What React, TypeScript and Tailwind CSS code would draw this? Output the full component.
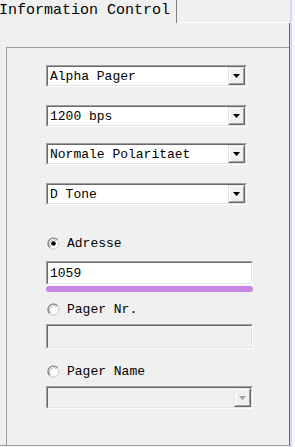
import React from "react";

const MONO = "font-['Liberation_Mono','DejaVu_Sans_Mono',monospace]";

function Sunken({ w, h, bg, children }: { w: number; h: number; bg: string; children?: React.ReactNode }) {
  return (
    <div
      className="border border-t-[#a0a0a0] border-l-[#a0a0a0] border-r-white border-b-white"
      style={{ width: w, height: h }}
    >
      <div
        className={`w-full h-full border border-t-[#696969] border-l-[#696969] border-r-[#e3e3e3] border-b-[#e3e3e3] flex items-center ${bg}`}
      >
        {children}
      </div>
    </div>
  );
}

function DropButton({ disabled }: { disabled?: boolean }) {
  return (
    <div className="h-full w-[17px] border border-t-[#e3e3e3] border-l-[#e3e3e3] border-r-[#696969] border-b-[#696969] bg-[#f0f0f0]">
      <div className="w-full h-full border border-t-white border-l-white border-r-[#a0a0a0] border-b-[#a0a0a0] flex items-center justify-center">
        <svg width="7" height="4" viewBox="0 0 7 4">
          <polygon points="0,0 7,0 3.5,4" fill={disabled ? "#a0a0a0" : "#000"} />
        </svg>
      </div>
    </div>
  );
}

function Combo({ text, w = 201, h = 22, disabled }: { text?: string; w?: number; h?: number; disabled?: boolean }) {
  return (
    <Sunken w={w} h={h} bg={disabled ? "bg-[#f0f0f0]" : "bg-white"}>
      <div className={`flex-1 pl-[2px] text-[13px] leading-none text-black whitespace-pre ${MONO}`}>{text}</div>
      <DropButton disabled={disabled} />
    </Sunken>
  );
}

function Radio({ checked, label }: { checked?: boolean; label: string }) {
  return (
    <div className="flex items-center h-[14px]">
      <svg width="13" height="13" viewBox="0 0 13 13" className="ml-[1px] shrink-0">
        <circle cx="6.5" cy="6.5" r="5.5" fill="#ffffff" stroke="#c8c8c8" strokeWidth="1" />
        <path d="M 2.6 10.4 A 5.5 5.5 0 0 1 10.4 2.6" fill="none" stroke="#7a7a7a" strokeWidth="1.2" />
        <path d="M 3.5 9.5 A 4.3 4.3 0 0 1 9.5 3.5" fill="none" stroke="#a0a0a0" strokeWidth="0.8" />
        {checked && <circle cx="6.5" cy="6.5" r="2.3" fill="#000" />}
      </svg>
      <span className={`ml-[7px] text-[13px] leading-none text-black whitespace-pre ${MONO}`}>{label}</span>
    </div>
  );
}

export default function App() {
  return (
    <div className="w-[295px] h-[447px] bg-[#f0f0f0] flex overflow-hidden">
      <div className="w-[290px] flex flex-col">
        <div className="h-[23px] flex shrink-0">
          <div className="w-[177px] border-r border-[#808080] relative">
            <span className={`absolute left-[-1px] top-[2px] text-[15px] leading-[18px] text-black whitespace-pre ${MONO}`}>
              Information Control
            </span>
          </div>
          <div className="flex-1 border-b border-white" />
        </div>
        <div className="h-[423px] shrink-0 border-r border-r-[#696969] border-b border-b-[#a0a0a0] pl-[6px] pt-[24px] flex flex-col">
          <div className="flex-1 border-t border-l border-[#a0a0a0] pl-[39px] flex flex-col">
            <div className="mt-[17px]">
              <Combo text="Alpha Pager" />
            </div>
            <div className="mt-[18px]">
              <Combo text="1200 bps" />
            </div>
            <div className="mt-[16px]">
              <Combo text="Normale Polaritaet" />
            </div>
            <div className="mt-[18px]">
              <Combo text="D Tone" />
            </div>
            <div className="mt-[31px]">
              <Radio checked label="Adresse" />
            </div>
            <div className="mt-[11px]">
              <Sunken w={207} h={24} bg="bg-white">
                <span className={`pl-[2px] text-[13px] leading-none text-black ${MONO}`}>1059</span>
              </Sunken>
            </div>
            <div className="mt-[1px] w-[207px] h-[6px] rounded-full bg-[#c986e6]" />
            <div className="mt-[10px]">
              <Radio label="Pager Nr." />
            </div>
            <div className="mt-[8px]">
              <Sunken w={207} h={25} bg="bg-[#f0f0f0]" />
            </div>
            <div className="mt-[15px]">
              <Radio label="Pager Name" />
            </div>
            <div className="mt-[8px]">
              <Combo w={207} h={23} disabled />
            </div>
          </div>
        </div>
      </div>
      <div className="w-[2px] bg-[#dcd6f2]" />
      <div className="flex-1 bg-[#f6f6f8]" />
    </div>
  );
}
